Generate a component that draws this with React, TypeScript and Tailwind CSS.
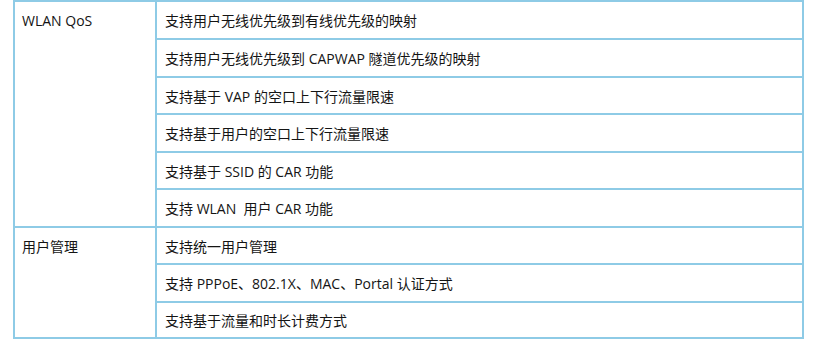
const groups: { name: string; rows: { text: string; h: string }[] }[] = [
  {
    name: "WLAN QoS",
    rows: [
      { text: "支持用户无线优先级到有线优先级的映射", h: "h-[38px]" },
      { text: "支持用户无线优先级到 CAPWAP 隧道优先级的映射", h: "h-[38px]" },
      { text: "支持基于 VAP 的空口上下行流量限速", h: "h-[37px]" },
      { text: "支持基于用户的空口上下行流量限速", h: "h-[38px]" },
      { text: "支持基于 SSID 的 CAR 功能", h: "h-[37px]" },
      { text: "支持 WLAN  用户 CAR 功能", h: "h-[38px]" },
    ],
  },
  {
    name: "用户管理",
    rows: [
      { text: "支持统一用户管理", h: "h-[37px]" },
      { text: "支持 PPPoE、802.1X、MAC、Portal 认证方式", h: "h-[38px]" },
      { text: "支持基于流量和时长计费方式", h: "h-[36px]" },
    ],
  },
];

export default function App() {
  return (
    <div className="h-[352px] w-[821px] bg-white font-['Open_Sans','Noto_Sans_CJK_SC',sans-serif] text-[14px] text-[#141414]">
      <div className="ml-[13px] w-[791px] border-l-2 border-t-2 border-[#8ecbe6]">
        {groups.map((g) => (
          <div className="flex" key={g.name}>
            <div className="w-[142px] shrink-0 border-b-2 border-r-2 border-[#8ecbe6] pl-[7px] pt-[8px] leading-[22px]">
              {g.name}
            </div>
            <div className="flex-1">
              {g.rows.map((r) => (
                <div
                  className={`${r.h} flex items-center whitespace-pre border-b-2 border-r-2 border-[#8ecbe6] pl-[8px] pt-[1px]`}
                  key={r.text}
                >
                  {r.text}
                </div>
              ))}
            </div>
          </div>
        ))}
      </div>
    </div>
  );
}
